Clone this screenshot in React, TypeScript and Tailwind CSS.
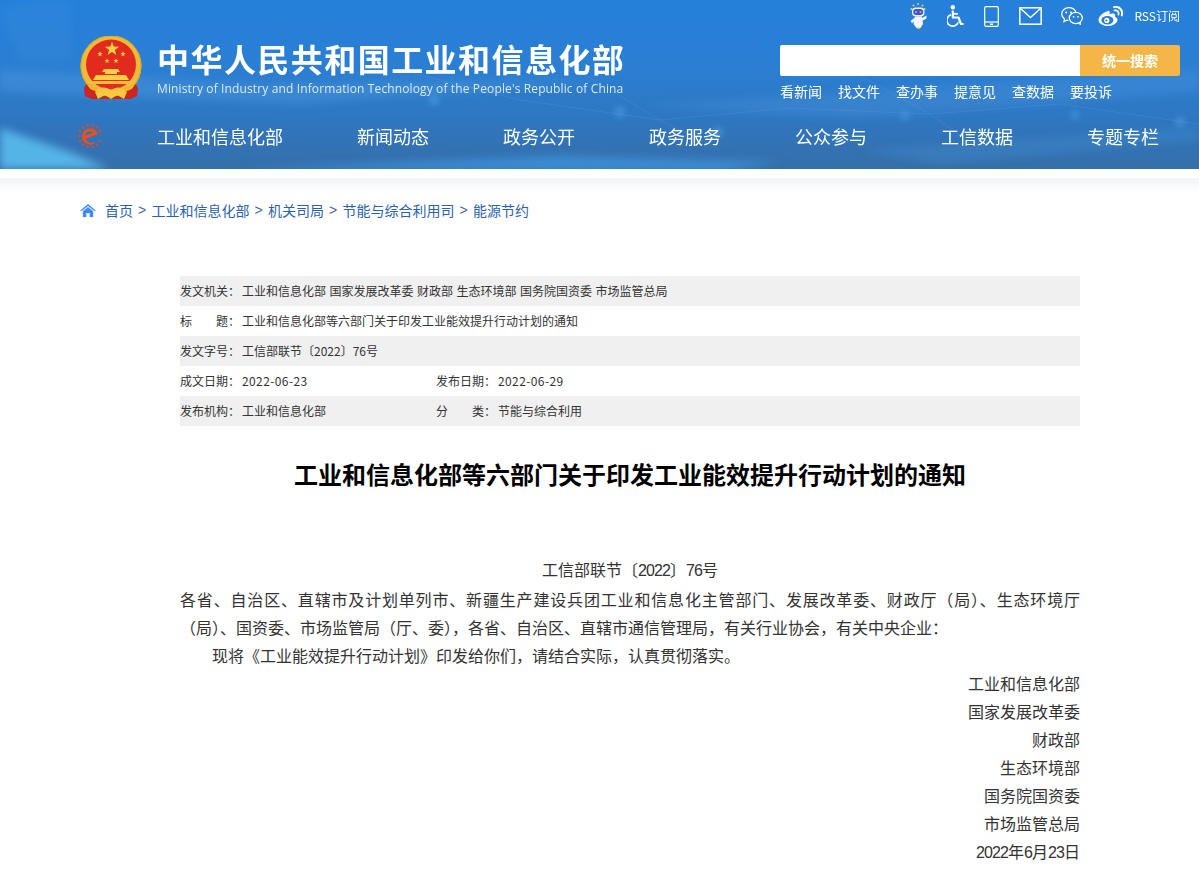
const mainNav = ["工业和信息化部", "新闻动态", "政务公开", "政务服务", "公众参与", "工信数据", "专题专栏"];
const quickLinks = ["看新闻", "找文件", "查办事", "提意见", "查数据", "要投诉"];
const crumbs = ["工业和信息化部", "机关司局", "节能与综合利用司", "能源节约"];
const signers = ["工业和信息化部", "国家发展改革委", "财政部", "生态环境部", "国务院国资委", "市场监管总局"];

function HeaderBackdrop() {
  return (
    <svg className="absolute inset-0 h-full w-full" viewBox="0 0 1199 169" preserveAspectRatio="none">
      <defs>
        <linearGradient id="hb" x1="0" y1="0" x2="0" y2="1">
          <stop offset="0" stopColor="#2580da" />
          <stop offset="0.4" stopColor="#2b7fd3" />
          <stop offset="0.72" stopColor="#2f76c0" />
          <stop offset="1" stopColor="#366fa8" />
        </linearGradient>
        <filter id="blur" x="-10%" y="-100%" width="120%" height="300%">
          <feGaussianBlur stdDeviation="4" />
        </filter>
        <filter id="glow" x="-100%" y="-100%" width="300%" height="300%">
          <feGaussianBlur stdDeviation="3" />
        </filter>
      </defs>
      <rect width="1199" height="169" fill="url(#hb)" />
      <g filter="url(#blur)">
        <path d="M0 70 L260 84 L620 80 L300 104 L0 92Z" fill="#5aa3e6" opacity="0.32" />
        <path d="M640 106 L1199 70 L1199 92 L860 118Z" fill="#5aa3e6" opacity="0.22" />
        <path d="M0 128 L70 152 L110 169 L0 169Z" fill="#5cc0f0" opacity="0.85" />
        <path d="M240 169 L560 156 L780 162 L720 172Z" fill="#3f95e2" opacity="0.75" />
        <path d="M0 10 L40 0 L70 0 L70 60 L20 60Z" fill="#3f8ee0" opacity="0.25" />
        <path d="M860 150 L1199 128 L1199 140 L940 164Z" fill="#4d9fe4" opacity="0.22" />
      </g>
      <g stroke="#7dbcf0" strokeWidth="0.8" fill="none" opacity="0.18">
        <path d="M400 70 L520 100 L660 120 L790 108 L930 114 L1060 104 L1199 124" />
        <path d="M560 60 L660 120 L720 150" />
        <path d="M850 70 L930 114 L980 150" />
      </g>
      <g fill="#58aef0" opacity="0.5" filter="url(#glow)">
        <circle cx="434" cy="100" r="5" />
        <circle cx="620" cy="112" r="5" />
        <circle cx="718" cy="132" r="5" />
        <circle cx="905" cy="116" r="4" />
        <circle cx="1075" cy="115" r="4" />
        <circle cx="1180" cy="122" r="5" />
      </g>
    </svg>
  );
}

function Star({ x, y, r }: { x: number; y: number; r: number }) {
  const pts = Array.from({ length: 10 }, (_, i) => {
    const a = (-90 + i * 36) * (Math.PI / 180);
    const d = i % 2 === 0 ? r : r * 0.4;
    return `${(x + d * Math.cos(a)).toFixed(2)},${(y + d * Math.sin(a)).toFixed(2)}`;
  }).join(" ");
  return <polygon points={pts} fill="#f8cf45" />;
}

function Emblem() {
  return (
    <svg width="62" height="64" viewBox="0 0 62 64" className="shrink-0">
      <path d="M9 44 L4 52 L5 60 L12 63 L50 63 L57 60 L58 52 L53 44Z" fill="#c9231f" />
      <circle cx="31" cy="30" r="30.5" fill="#f0bb36" />
      <circle cx="31" cy="30" r="30" fill="none" stroke="#e0a326" strokeWidth="1" />
      <circle cx="31" cy="28.5" r="25" fill="#e32a1f" />
      <Star x={32} y={13} r={7.5} />
      <Star x={20} y={18} r={3} />
      <Star x={43} y={18} r={3} />
      <Star x={27} y={25} r={2.8} />
      <Star x={36} y={25} r={2.8} />
      <path d="M24 33 H38 L40 36 H22Z M25 36 H37 V38 H25Z M16 39 H46 L49 44 H13Z" fill="#f8cf45" />
      <path d="M10 45 H52 V48 H10Z" fill="#f3be3a" />
      <path d="M7 47 Q31 62 55 47 L52 53 Q31 63 10 53Z" fill="#eeb52f" />
      <path d="M9 53 L5 52 L5 60 L13 63 L21 57Z M53 53 L57 52 L57 60 L49 63 L41 57Z" fill="#cf241f" />
      <path d="M15 56 Q23 48 31 54 Q39 48 47 56 L44 63 L37 59 L31 63 L25 59 L18 63Z" fill="#f5c840" />
    </svg>
  );
}

function SiteMark() {
  const dots = Array.from({ length: 14 }, (_, i) => {
    const a = (i * 360) / 14 * (Math.PI / 180);
    return { x: 12 + 11 * Math.cos(a), y: 12 + 11 * Math.sin(a) };
  });
  return (
    <svg width="28" height="24" viewBox="0 0 28 24" className="shrink-0">
      {dots.map((d) => (
        <circle key={d.x + "," + d.y} cx={d.x} cy={d.y} r="1.2" fill="#e4491e" />
      ))}
      <path d="M6.5 13.5 L18 9.5 A6.6 6.6 0 0 0 5.6 11.5 A6.6 6.6 0 0 0 17 17" fill="none" stroke="#e8501c" strokeWidth="3" />
      <path d="M10 16 C15 16.5 21 12.5 27.5 9.5 C25 14.5 17 20 11 18.5Z" fill="#1f78cc" />
    </svg>
  );
}

function RobotIcon() {
  return (
    <svg width="17" height="26" viewBox="0 0 17 26">
      <g fill="#f3cf4a">
        <circle cx="1.5" cy="6" r="1" /><circle cx="3.5" cy="2.5" r="1" /><circle cx="8" cy="1" r="1" /><circle cx="12.5" cy="2.5" r="1" /><circle cx="14.5" cy="6" r="1" />
      </g>
      <rect x="2" y="4.5" width="12.5" height="9" rx="4" fill="#eaf1fb" />
      <rect x="3.2" y="6" width="10" height="6" rx="3" fill="#4a50c4" />
      <circle cx="6" cy="9" r="1" fill="#8fb4ff" /><circle cx="10.5" cy="9" r="1" fill="#8fb4ff" />
      <path d="M5 13.5 H12 L13 21 L10.5 25 H6.5 L3.5 21Z" fill="#f2f6fc" />
      <path d="M5 14.5 L0.5 18 L2 20 L6 17.5Z M12 15 L16.5 12.5 L16.5 15.5 L12 18Z" fill="#f2f6fc" />
      <path d="M7 24.5 H10.5 L9.5 26 H7.5Z" fill="#e6c36a" />
    </svg>
  );
}

function WheelchairIcon() {
  return (
    <svg width="17" height="22" viewBox="0 0 17 22" fill="none" stroke="#fff">
      <circle cx="5.8" cy="2.2" r="2.2" fill="#fff" stroke="none" />
      <path d="M5.8 5.6 V12.5 H11.5 L14 19 H16.5" strokeWidth="2.2" strokeLinejoin="round" />
      <path d="M5.8 8.8 H11" strokeWidth="1.8" />
      <path d="M4 9.8 A5.8 5.8 0 1 0 11.2 17.2" strokeWidth="1.6" />
    </svg>
  );
}

function PhoneIcon() {
  return (
    <svg width="15" height="21" viewBox="0 0 15 21" fill="none" stroke="#fff" strokeWidth="1.2">
      <rect x="0.7" y="0.7" width="13.6" height="19.6" rx="1.4" />
      <path d="M0.7 16 H14.3" />
      <path d="M6 18.2 H9" strokeWidth="1.5" />
    </svg>
  );
}

function MailIcon() {
  return (
    <svg width="23" height="18" viewBox="0 0 23 18" fill="none" stroke="#fff" strokeWidth="1.5">
      <rect x="0.8" y="0.8" width="21.4" height="16.4" />
      <path d="M1.2 1.2 L11.5 10.5 L21.8 1.2" />
    </svg>
  );
}

function WechatIcon() {
  return (
    <svg width="22" height="18" viewBox="0 0 22 18" fill="none" stroke="#fff" strokeWidth="1.3">
      <path d="M7.5 13.4 C7 13.4 6.2 13.3 5.4 13.1 L3 14.5 L3.5 12 C1.8 10.8 0.7 9 0.7 7 C0.7 3.4 3.9 0.7 7.8 0.7 C11.2 0.7 14.2 2.7 14.9 5.7" />
      <ellipse cx="14.8" cy="11" rx="6.5" ry="5.6" />
      <path d="M18.2 15.8 L19.2 17.4 L19.4 14.8" />
      <g fill="#fff" stroke="none">
        <circle cx="5.2" cy="5.4" r="1" /><circle cx="10" cy="5.4" r="1" /><circle cx="12.6" cy="9.8" r="0.9" /><circle cx="17" cy="9.8" r="0.9" />
      </g>
    </svg>
  );
}

function WeiboIcon() {
  return (
    <svg width="25" height="20" viewBox="0 0 25 20" fill="none">
      <path d="M10 5 C5 6.5 0.5 10.5 0.5 14 C0.5 17.5 5 20 10 20 C15.5 20 19.5 17 19.5 13.8 C19.5 12.1 17.9 11.5 17 11.1 C17.5 9.5 17.3 8.3 16.1 7.8 C14.5 7.2 12.5 8.1 11.5 8.5 C11.9 6.7 11.9 4.1 10 5Z" fill="#fff" />
      <ellipse cx="9.4" cy="14.2" rx="6" ry="4.2" fill="#2a7dd0" />
      <circle cx="8.8" cy="14.4" r="2.6" fill="#fff" />
      <circle cx="8.4" cy="14.6" r="1" fill="#2a7dd0" />
      <path d="M16 1 C21 -0.2 25.2 4.2 23.8 9.4" stroke="#fff" strokeWidth="2" strokeLinecap="round" />
      <path d="M16.5 4.4 C19.3 3.8 21.3 6 20.5 8.6" stroke="#fff" strokeWidth="1.7" strokeLinecap="round" />
    </svg>
  );
}

function HomeIcon() {
  return (
    <svg width="16" height="13" viewBox="0 0 16 13" fill="#3d8df5">
      <path d="M8 0 L16 6.8 L14 6.8 L8 1.9 L2 6.8 L0 6.8Z" />
      <path d="M2.8 7.2 L8 3 L13.2 7.2 V13 H9.6 V9 H6.4 V13 H2.8Z" />
    </svg>
  );
}

function MetaRow({ shaded, children }: { shaded?: boolean; children: React.ReactNode }) {
  return <div className={`flex h-[30px] items-center ${shaded ? "bg-[#f0f0f0]" : ""}`}>{children}</div>;
}

function Field({ label, value, wide, date }: { label: string; value: string; wide?: boolean; date?: boolean }) {
  return (
    <div className={`flex whitespace-nowrap ${wide ? "flex-1" : "w-[256px]"}`}>
      <span className="flex w-[62px] shrink-0 justify-between pr-[2px]">
        {label.length === 2 ? (
          <>
            <span>{label[0]}</span>
            <span>{label[1]}：</span>
          </>
        ) : (
          <span>{label}：</span>
        )}
      </span>
      <span className={date ? "tracking-[0.4px]" : "[word-spacing:0.8px]"}>{value}</span>
    </div>
  );
}

// digits in the body copy run narrower than the CJK font's own
function Num({ children }: { children: string }) {
  return <span className="font-['Liberation_Sans',sans-serif] tracking-[-0.9px]">{children}</span>;
}

export default function App() {
  return (
    <div className="min-h-[892px] bg-white font-['Noto_Sans_CJK_SC','Microsoft_YaHei',sans-serif] text-[#333]">
      <header className="relative h-[169px] overflow-hidden text-white">
        <HeaderBackdrop />
        <div className="relative flex h-full flex-col pl-[80px] pr-[19px]">
          <div className="flex h-[32px] items-center justify-end">
            <div className="flex items-center gap-[20px]">
              <RobotIcon />
              <WheelchairIcon />
              <PhoneIcon />
              <MailIcon />
              <div className="-ml-px"><WechatIcon /></div>
              <div className="-ml-[5px]"><WeiboIcon /></div>
            </div>
            <span className="ml-[11px] text-[12px] leading-[18px]">RSS订阅</span>
          </div>
          <div className="flex h-[74px] justify-between">
            <div className="flex">
              <div className="pt-[4px]"><Emblem /></div>
              <div className="ml-[15px] pt-[6px]">
                <div className="text-[32px] font-bold leading-[40px] tracking-[1.45px]">中华人民共和国工业和信息化部</div>
                <div className="mt-[2px] font-['Open_Sans',sans-serif] text-[12px] leading-[18px] tracking-[0.125px] text-[#dbe9f8]">
                  Ministry of Industry and Information Technology of the People's Republic of China
                </div>
              </div>
            </div>
            <div className="w-[400px] pt-[13px]">
              <div className="flex h-[31px]">
                <div className="w-[300px] rounded-l-[2px] bg-white" />
                <div className="flex w-[100px] items-center justify-center rounded-r-[2px] bg-[#f3b647] text-[14px] font-bold">统一搜索</div>
              </div>
              <div className="mt-[5px] flex gap-[16px] text-[14px] leading-[20px]">
                {quickLinks.map((l) => (
                  <span key={l}>{l}</span>
                ))}
              </div>
            </div>
          </div>
          <nav className="flex items-center pt-[16px]">
            <div className="-ml-[2px] w-[79px]"><SiteMark /></div>
            <div className="flex flex-1 gap-[74px] whitespace-nowrap text-[18px] leading-[28px]">
              {mainNav.map((n) => (
                <span key={n}>{n}</span>
              ))}
            </div>
          </nav>
        </div>
      </header>
      <div className="mt-[9px] h-[14px] bg-gradient-to-b from-[#f1f4f8] to-white" />

      <div className="mt-[8px] flex h-[20px] items-center pl-[80px] text-[14px] leading-[20px] text-[#2a62ae]">
        <HomeIcon />
        <span className="ml-[9px]">首页</span>
        {crumbs.map((c) => (
          <span key={c} className="flex">
            <span className="mx-[5px] w-[8.5px] font-['Liberation_Sans',sans-serif] text-[#4a6a9a]">&gt;</span>
            <span>{c}</span>
          </span>
        ))}
      </div>

      <main className="ml-[180px] w-[900px]">
        <section className="mt-[56px] text-[12px] leading-[18px]">
          <MetaRow shaded>
            <Field wide label="发文机关" value="工业和信息化部 国家发展改革委 财政部 生态环境部 国务院国资委 市场监管总局" />
          </MetaRow>
          <MetaRow>
            <Field wide label="标题" value="工业和信息化部等六部门关于印发工业能效提升行动计划的通知" />
          </MetaRow>
          <MetaRow shaded>
            <Field wide label="发文字号" value="工信部联节〔2022〕76号" />
          </MetaRow>
          <MetaRow>
            <Field date label="成文日期" value="2022-06-23" />
            <Field date label="发布日期" value="2022-06-29" />
          </MetaRow>
          <MetaRow shaded>
            <Field label="发布机构" value="工业和信息化部" />
            <Field label="分类" value="节能与综合利用" />
          </MetaRow>
        </section>

        <h1 className="mt-[30px] text-center text-[24px] font-bold leading-[36px] text-black">
          工业和信息化部等六部门关于印发工业能效提升行动计划的通知
        </h1>

        <article className="mt-[63px] text-[16px] leading-[28px]">
          <p className="text-center">
            工信部联节〔<Num>2022</Num>〕<Num>76</Num>号
          </p>
          <p className="text-justify">
            各省、自治区、直辖市及计划单列市、新疆生产建设兵团工业和信息化主管部门、发展改革委、财政厅（局）、生态环境厅（局）、国资委、市场监管局（厅、委），各省、自治区、直辖市通信管理局，有关行业协会，有关中央企业：
          </p>
          <p className="indent-[32px]">现将《工业能效提升行动计划》印发给你们，请结合实际，认真贯彻落实。</p>
          {signers.map((s) => (
            <p key={s} className="text-right">{s}</p>
          ))}
          <p className="text-right">
            <Num>2022</Num>年<Num>6</Num>月<Num>23</Num>日
          </p>
        </article>
      </main>
    </div>
  );
}
